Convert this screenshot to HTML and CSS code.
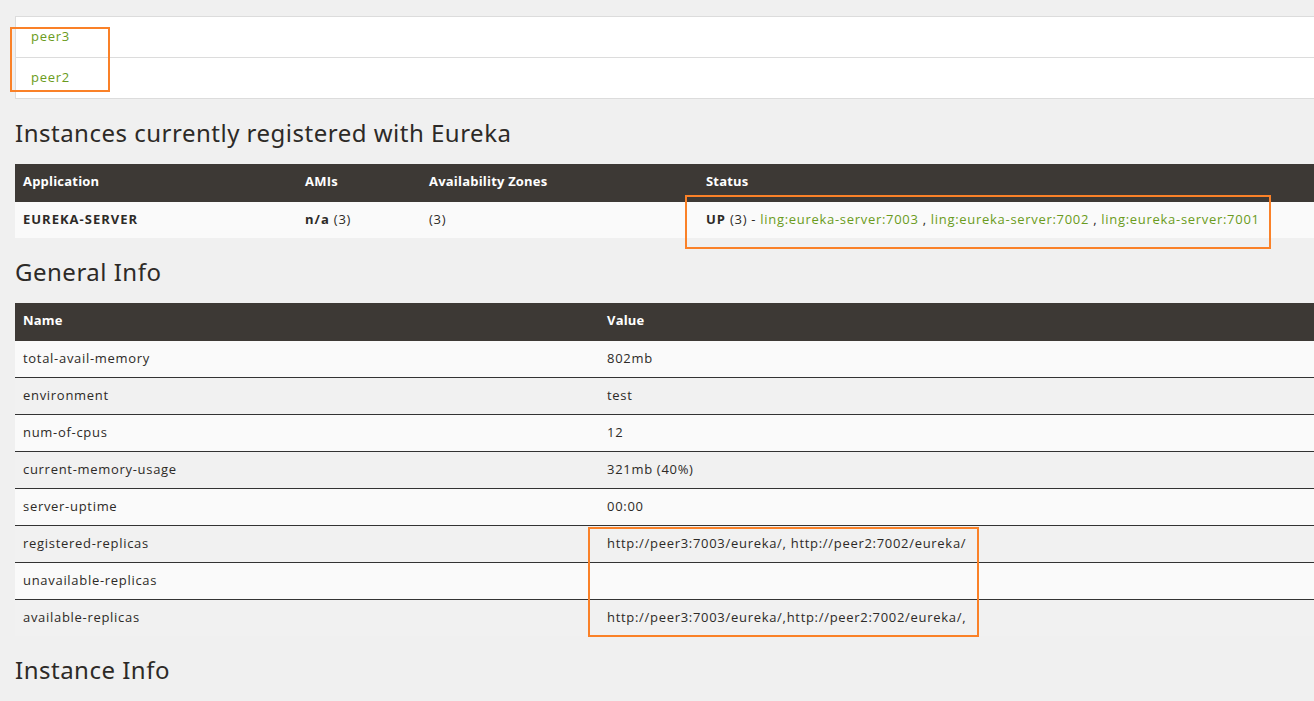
FILE: index.html
```html
<!DOCTYPE html>
<html>
<head>
<meta charset="utf-8">
<title>Eureka</title>
<link rel="stylesheet" href="styles.css">
</head>
<body>
<div class="page">
  <div class="peers">
    <div class="peer-row"><a class="link" href="#">peer3</a></div>
    <div class="peer-row"><a class="link" href="#">peer2</a></div>
  </div>

  <h2 class="heading">Instances currently registered with Eureka</h2>
  <table class="grid apps">
    <thead>
      <tr><th class="c-app">Application</th><th class="c-ami">AMIs</th><th class="c-zone">Availability Zones</th><th>Status</th></tr>
    </thead>
    <tbody>
      <tr>
        <td><b>EUREKA-SERVER</b></td>
        <td><b>n/a</b> (3)</td>
        <td>(3)</td>
        <td><b>UP</b> (3) - <a class="link" href="#">ling:eureka-server:7003</a> , <a class="link" href="#">ling:eureka-server:7002</a> , <a class="link" href="#">ling:eureka-server:7001</a></td>
      </tr>
    </tbody>
  </table>

  <h2 class="heading">General Info</h2>
  <table class="grid info">
    <thead>
      <tr><th class="c-name">Name</th><th>Value</th></tr>
    </thead>
    <tbody>
      <tr><td>total-avail-memory</td><td>802mb</td></tr>
      <tr><td>environment</td><td>test</td></tr>
      <tr><td>num-of-cpus</td><td>12</td></tr>
      <tr><td>current-memory-usage</td><td>321mb (40%)</td></tr>
      <tr><td>server-uptime</td><td>00:00</td></tr>
      <tr><td>registered-replicas</td><td>http://peer3:7003/eureka/, http://peer2:7002/eureka/</td></tr>
      <tr><td>unavailable-replicas</td><td></td></tr>
      <tr><td>available-replicas</td><td>http://peer3:7003/eureka/,http://peer2:7002/eureka/,</td></tr>
    </tbody>
  </table>

  <h2 class="heading">Instance Info</h2>

  <div class="mark mark-peers"></div>
  <div class="mark mark-status"></div>
  <div class="mark mark-replicas"></div>
</div>
</body>
</html>
```

FILE: styles.css
```css
html, body {
  margin: 0;
  padding: 0;
}
body {
  background: #f0f0f0;
  color: #2d2a27;
  font-family: "Open Sans", "Liberation Sans", sans-serif;
  font-size: 13px;
  letter-spacing: 0.7px;
  overflow: hidden;
}
.page {
  position: relative;
  width: 1330px;
  padding: 16px 0 40px 15px;
}
.link {
  color: #6a9b20;
  text-decoration: none;
}
.peers {
  background: #fff;
  border: 1px solid #dcdcdc;
}
.peer-row {
  height: 40px;
  line-height: 39px;
  padding-left: 15px;
}
.peer-row + .peer-row {
  border-top: 1px solid #dcdcdc;
}
.heading {
  font-family: "Noto Sans", "DejaVu Sans", sans-serif;
  font-weight: 400;
  font-size: 24px;
  letter-spacing: 0.5px;
  line-height: 25px;
  margin: 21px 0 19px;
  color: #2d2a27;
}
.grid {
  width: 100%;
  border-collapse: collapse;
  border-spacing: 0;
  table-layout: fixed;
}
.grid th {
  background: #3d3935;
  color: #fff;
  font-weight: 700;
  letter-spacing: 0.2px;
  text-align: left;
  height: 38px;
  padding: 0 8px 4px;
  box-sizing: border-box;
}
.grid td {
  padding: 7px 8px 9px;
  line-height: 20px;
  text-align: left;
  border-bottom: 1px solid #333;
}
.grid td b {
  letter-spacing: 1px;
}
.grid tbody tr:last-child td {
  border-bottom: 0;
}
.grid tbody tr:nth-child(odd) td {
  background: #fafafa;
}
.grid tbody tr:nth-child(even) td {
  background: #f1f1f1;
}
.c-app { width: 282px; }
.c-ami { width: 124px; }
.c-zone { width: 277px; }
.c-name { width: 584px; }

.mark {
  position: absolute;
  border: 2px solid #fa8128;
  box-sizing: border-box;
}
.mark-peers {
  left: 10px;
  top: 27px;
  width: 100px;
  height: 65px;
}
.mark-status {
  left: 685px;
  top: 195px;
  width: 586px;
  height: 54px;
}
.mark-replicas {
  left: 588px;
  top: 527px;
  width: 391px;
  height: 110px;
}
```
